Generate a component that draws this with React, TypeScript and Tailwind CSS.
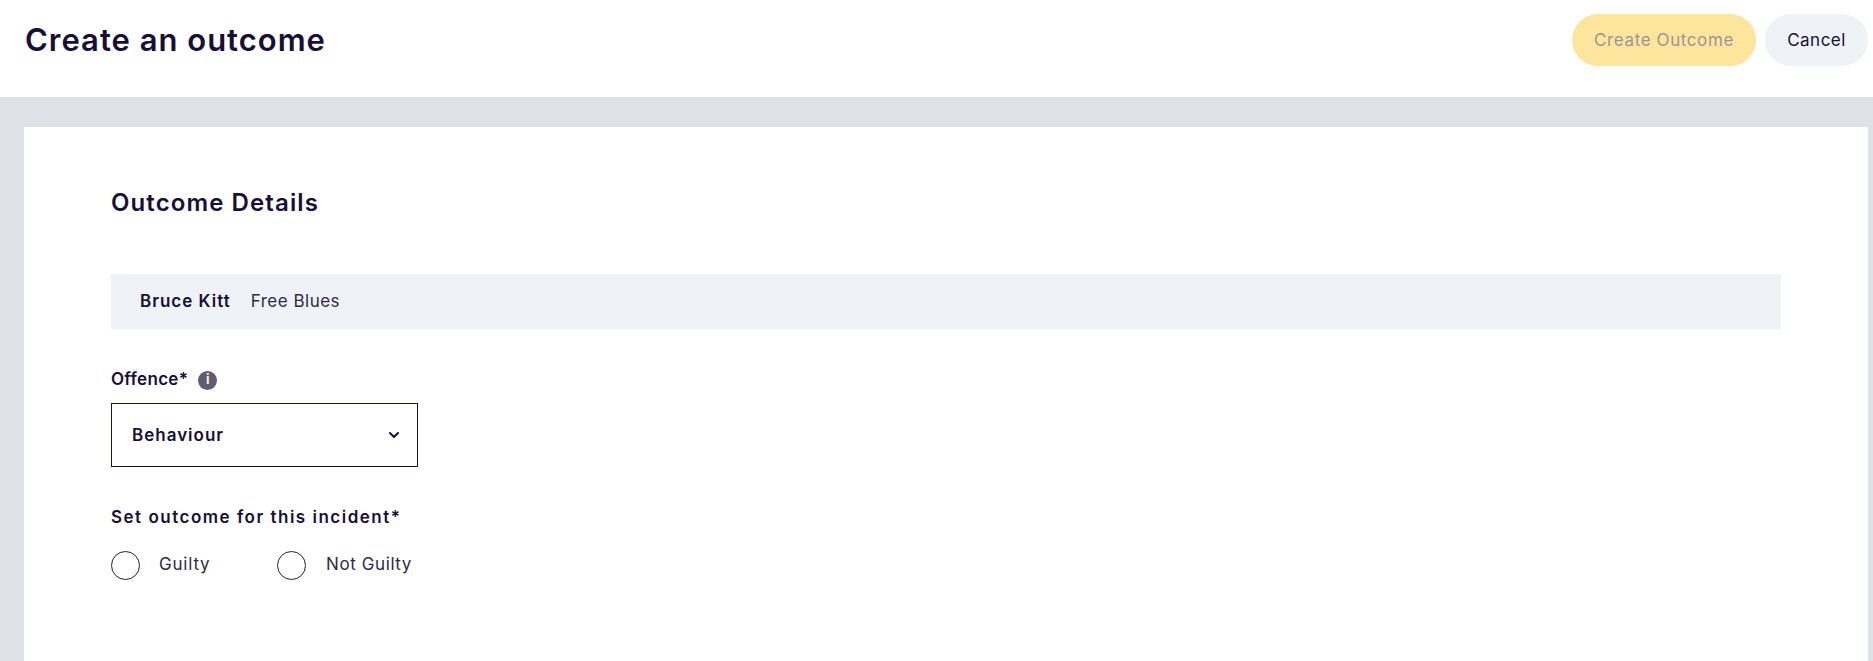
import React from 'react';
import { ChevronDown } from 'lucide-react';

const App: React.FC = () => {
  return (
    <div className="min-h-[661px] h-[661px] overflow-hidden flex flex-col bg-[#dee1e6] font-['Inter',sans-serif] text-[#170f36]">
      <header className="h-[97px] shrink-0 bg-white flex items-start justify-between pl-[25px] pr-[5px]">
        <h1 className="mt-[21px] text-[31px] leading-[38px] font-semibold tracking-[1px]">Create an outcome</h1>
        <div className="mt-[14px] flex gap-[9px]">
          <button className="w-[184px] h-[52px] pt-[1px] rounded-full bg-[#fee59d] text-[#9d9690] text-[17px] tracking-[0.6px]">Create Outcome</button>
          <button className="w-[103px] h-[52px] pt-[1px] rounded-full bg-[#eff2f7] text-[17px] tracking-[0.5px]">Cancel</button>
        </div>
      </header>

      <main className="flex-1 mt-[30px] ml-[24px] mr-[5px] bg-white pl-[87px] pr-[87px]">
        <h2 className="mt-[61px] text-[24px] leading-[30px] font-semibold tracking-[1.1px]">Outcome Details</h2>

        <div className="mt-[56px] h-[55px] bg-[#eff2f7] flex items-center pl-[29px] gap-[20px] text-[17px]">
          <span className="font-semibold tracking-[1px]">Bruce Kitt</span>
          <span className="text-[#2f2a48] tracking-[0.5px]">Free Blues</span>
        </div>

        <div className="mt-[40px] flex items-center h-[22px] gap-[10px] text-[17px] font-semibold">
          <span className="tracking-[0.3px]">Offence*</span>
          <span className="w-[19px] h-[19px] rounded-full bg-[#5f5d6e] text-[#f5f1dc] text-[13px] font-bold flex items-center justify-center">i</span>
        </div>

        <div className="mt-[12px] w-[307px] h-[64px] pt-[1px] border border-[#170f36] flex items-center justify-between pl-[20px] pr-[15px] text-[17px] font-semibold">
          <span className="tracking-[1px]">Behaviour</span>
          <ChevronDown className="w-[16px] h-[16px] -mt-[1px]" strokeWidth={3} />
        </div>

        <div className="mt-[39px] text-[17px] leading-[22px] font-semibold tracking-[1.5px]">Set outcome for this incident*</div>

        <div className="mt-[23px] flex items-center text-[17px] text-[#2f2a48]">
          <span className="w-[29px] h-[29px] rounded-full border border-[#1f1f2a]" />
          <span className="ml-[19px] w-[118px] -mt-[2px] tracking-[0.8px]">Guilty</span>
          <span className="w-[29px] h-[29px] rounded-full border border-[#1f1f2a]" />
          <span className="ml-[20px] -mt-[2px] tracking-[0.6px]">Not Guilty</span>
        </div>
      </main>
    </div>
  );
};

export default App;
